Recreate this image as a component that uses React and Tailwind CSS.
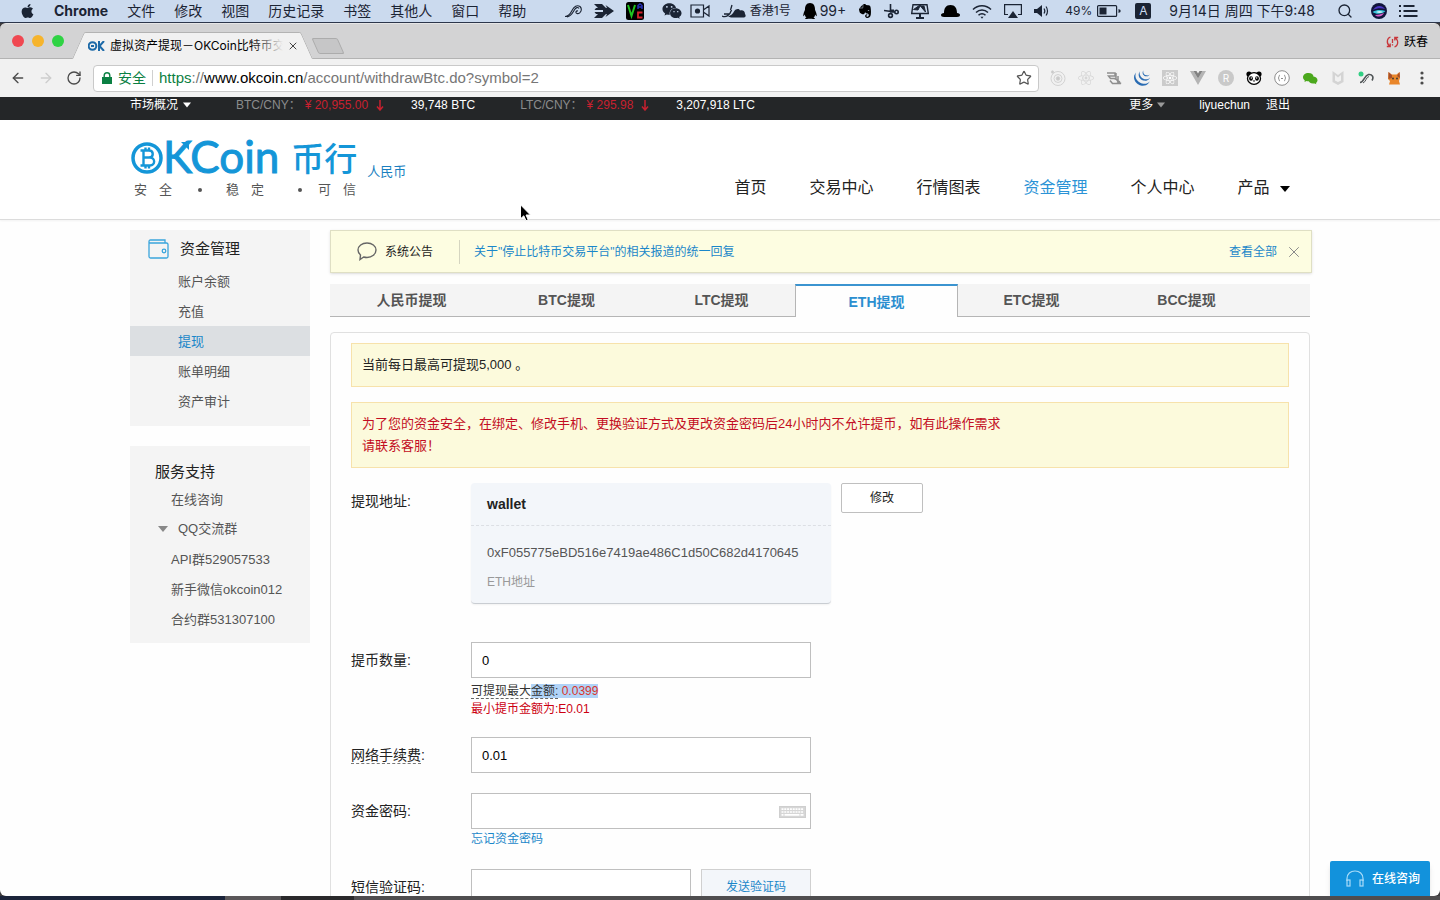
import React, { useState } from "react";
import { FaApple, FaWeixin, FaQq, FaEvernote, FaReact } from "react-icons/fa";
import { SiJquery } from "react-icons/si";
import { ArrowLeft, ArrowRight, RotateCw, Search, Star, X } from "lucide-react";

const menus = ["文件", "修改", "视图", "历史记录", "书签", "其他人", "窗口", "帮助"];

const navLinks = ["首页", "交易中心", "行情图表", "资金管理", "个人中心"];

const accountLinks = ["账户余额", "充值", "提现", "账单明细", "资产审计"];

const groups = ["API群529057533", "新手微信okcoin012", "合约群531307100"];

const tabs = ["人民币提现", "BTC提现", "LTC提现", "ETH提现", "ETC提现", "BCC提现"];

const Caret = ({ className }) => (
  <svg viewBox="0 0 10 6" className={className} fill="currentColor">
    <path d="M0 0h10L5 6z" />
  </svg>
);

const DownArrow = () => (
  <svg viewBox="0 0 8 11" className="w-2 h-[11px]" fill="none" stroke="currentColor" strokeWidth="1.5">
    <path d="M4 0v10M1 6.5l3 3.5 3-3.5" />
  </svg>
);

const StatusIcons = () => (
  <div className="flex items-center gap-3">
    <svg viewBox="0 0 18 14" className="w-[18px] h-3.5" fill="none" stroke="currentColor" strokeWidth="1.1">
      <path d="M1 12.500c3 0 5-2 7-6s5-6 8-4c3 3 0 8-3 7-2-1-1-3 1-2.500M3 13c4-1 5-3 7-6.500s4-3.500 5-2" />
    </svg>
    <svg viewBox="0 0 20 14" className="w-5 h-3.5" fill="currentColor">
      <path d="M0 0h8l4 4 1-.2L11.500 1 20 7l-8.500 6 1.500-2.800-1-.2-4 4H0l4-4H2L.5 8h8.500V6H.5L2 4h2z" />
    </svg>
    <svg viewBox="0 0 18 18" className="w-[18px] h-[18px]" fill="none">
      <rect width="18" height="18" rx="2.500" fill="#000" />
      <path d="M2 3l3.500 11L9 3" stroke="#1fc41f" strokeWidth="2" />
      <path d="M12 7V3.500l2-1.500 2 1.500V7M12 5h4" stroke="#2730b8" strokeWidth="1.500" />
      <path d="M16.500 10.500h-4.500v5h4.500" stroke="#d3202c" strokeWidth="1.800" />
    </svg>
    <FaWeixin className="w-5 h-5 ml-1.5" />
    <svg viewBox="0 0 20 14" className="w-5 h-3.5 -ml-1" fill="none" stroke="currentColor" strokeWidth="1.2">
      <path d="M1 1h12.500v12H1zM14 5.500L19 2v10l-5-3.500" />
      <circle cx="7.500" cy="7" r="2.600" fill="currentColor" stroke="none" />
    </svg>
    <div className="flex items-center gap-1">
      <svg viewBox="0 0 24 14" className="w-6 h-3.5" fill="currentColor">
        <path d="M6 12.500c3-1 5-3 6-5 2-3 5-3 6-1 3-1 5 1 5 3.500 1 1 1 3-1 3.500H9z" />
        <path d="M0 12c4 2 8-1 9.500-6M2 10h5M10 1L8.500 6" fill="none" stroke="currentColor" strokeWidth="1.300" />
      </svg>
      <span className="text-xs">香港1号</span>
    </div>
    <div className="flex items-center gap-[3px]">
      <FaQq className="w-3.5 h-4 text-black" />
      <span className="text-sm">99+</span>
    </div>
    <FaEvernote className="w-3.5 h-4 text-black" />
    <svg viewBox="0 0 15 16" className="w-[15px] h-4" fill="none" stroke="currentColor" strokeWidth="1.600">
      <path d="M0 7.500l11 1.500M6.500 1v8.500" />
      <circle cx="12.500" cy="9" r="1.700" />
      <circle cx="6.500" cy="12.500" r="1.900" />
      <path d="M6 8h4" strokeWidth="3" />
    </svg>
    <svg viewBox="0 0 18 15" className="w-[18px] h-[15px]" fill="none" stroke="currentColor">
      <path d="M2 .7h14l1.300 8.800H.7z" strokeWidth="1.400" />
      <path d="M2.500 5.500L9 1l2 3 3.500 4L13 2H9l-2 4z" fill="currentColor" />
      <path d="M9 9.500V14M5 14h8" strokeWidth="2" />
    </svg>
    <svg viewBox="0 0 19 14" className="w-[19px] h-3.5 text-black" fill="currentColor">
      <path d="M3 9C3 4 5 1 9.500 1S16 4 16 9c2 0 3 1 3 2s-1 2-3 2H3c-2 0-3-1-3-2s1-2 3-2z" />
    </svg>
    <svg viewBox="0 0 20 15" className="w-5 h-[15px]" fill="none" stroke="currentColor" strokeWidth="1.500">
      <path d="M1 5.500c5-5 13-5 18 0M4 8.500c3.500-3.500 8.500-3.500 12 0M6.500 11.200c2-2 5-2 7 0" />
      <path d="M8.500 12.800h3L10 14.800z" fill="currentColor" stroke="none" />
    </svg>
    <svg viewBox="0 0 18 14" className="w-[18px] h-3.5" fill="none" stroke="currentColor" strokeWidth="1.200">
      <path d="M4 10.500H.6V.6h16.800v9.900H14" />
      <path d="M9 7l5 7H4z" fill="currentColor" stroke="none" />
    </svg>
    <svg viewBox="0 0 15 12" className="w-[15px] h-3" fill="currentColor">
      <path d="M0 4h3l5-4v12L3 8H0z" />
      <path d="M10 3.500c1 1.500 1 3.500 0 5M12 1.500c2 2.500 2 6.500 0 9" fill="none" stroke="currentColor" strokeWidth="1.200" />
    </svg>
  </div>
);

const MenuBar = () => (
  <div className="flex items-center h-[23px] shrink-0 pl-5 pr-[22px] bg-[#cbdaee] border-b border-[#2c364b] text-[#1b2434] whitespace-nowrap">
    <FaApple className="w-[15px] h-4" />
    <span className="ml-[19px] text-sm font-bold">Chrome</span>
    <div className="flex gap-[19px] ml-[19px] text-sm">
      {menus.map((m) => (
        <button key={m} type="button">{m}</button>
      ))}
    </div>
    <div className="flex items-center ml-auto">
      <StatusIcons />
      <span className="ml-4 mr-[5px] text-xs">49%</span>
      <svg viewBox="0 0 24 12" className="w-6 h-3" fill="none" stroke="currentColor" strokeWidth="1.200">
        <rect x=".6" y=".6" width="19" height="10.800" rx="1" />
        <path d="M2.500 2.500h7v7h-7z" fill="currentColor" stroke="none" />
        <path d="M21.500 4v4l2-1V5z" fill="currentColor" stroke="none" />
      </svg>
      <span className="flex items-center justify-center w-4 h-4 ml-3.5 rounded-xs bg-[#1b2434] text-[#cbdaee] text-xs">A</span>
      <span className="ml-[18px] text-sm">9月14日 周四 下午9:48</span>
      <Search className="w-4 h-4 ml-[22px]" strokeWidth={2} />
      <svg viewBox="0 0 16 16" className="w-4 h-4 ml-[18px]">
        <circle cx="8" cy="8" r="8" fill="#10143c" />
        <path d="M2 7c3-5 9-5 12-1-4-1-8-1-12 1z" fill="#4a35c4" />
        <path d="M1.500 9c5-3 9-2 13-1-3 3-9 4-13 1z" fill="#37c4d9" />
        <path d="M4 12c3 0 6-1 9-2-1 3-6 5-9 2z" fill="#d95fc8" />
        <path d="M5 9c2-1 5-1 7 0-2 1-5 1-7 0z" fill="#fff" />
      </svg>
      <svg viewBox="0 0 19 12" className="w-[19px] h-3 ml-3" stroke="currentColor" strokeWidth="2">
        <path d="M0 1h2M0 6h2M0 11h2M4.500 1h11M4.500 6h14M4.500 11h14" />
      </svg>
    </div>
  </div>
);

const TabStrip = () => (
  <div className="flex items-end h-9 shrink-0 bg-[#d3d3d4] border-b border-[#b3b3b3] rounded-t-md border-t border-t-[#e6e6e6]">
    <div className="flex gap-2 pl-3 pb-[11px]">
      <span className="w-3 h-3 rounded-full bg-[#f04851]" />
      <span className="w-3 h-3 rounded-full bg-[#f6b42c]" />
      <span className="w-3 h-3 rounded-full bg-[#2fd344]" />
    </div>
    <div className="relative flex items-center w-[229px] h-[27px] ml-3.5 -mb-px pl-2.5 pr-2">
      <span className="absolute inset-y-0 left-0 w-3/5 bg-[#f1f1f1] border-t border-l border-[#b3b3b3] rounded-tl-xs -skew-x-[24deg]" />
      <span className="absolute inset-y-0 right-0 w-3/5 bg-[#f1f1f1] border-t border-r border-[#b3b3b3] rounded-tr-xs skew-x-[24deg]" />
      <div className="relative flex items-center w-full">
        <svg viewBox="0 0 17 10" className="w-[17px] h-2.5 shrink-0" fill="none" stroke="#1d6aa8" strokeWidth="2">
          <circle cx="4.500" cy="5" r="3.800" />
          <path d="M3 5h3" />
          <path d="M11 0v10M16 0l-4.500 5L16 10" />
        </svg>
        <div className="relative flex-1 ml-[5px] overflow-hidden text-xs text-black whitespace-nowrap">
          虚拟资产提现－OKCoin比特币交
          <span className="absolute inset-y-0 right-0 w-8 bg-linear-to-r from-transparent to-[#f1f1f1]" />
        </div>
        <button type="button" aria-label="关闭标签页" className="ml-1">
          <X className="w-3 h-3 text-[#444]" />
        </button>
      </div>
    </div>
    <button type="button" aria-label="新标签页" className="w-[26px] h-4 mb-1 ml-2 bg-[#c6c6c7] border border-[#acacac] rounded-xs skew-x-[24deg]" />
    <div className="flex items-center gap-[5px] ml-auto mr-3 mb-2 text-xs text-black">
      <svg viewBox="0 0 13 12" className="w-[13px] h-3" fill="none" stroke="#c8363a" strokeWidth="1.300">
        <path d="M4.500 1C1 2 0 7 3.500 10M.8 10.500h3.400V7.500M8.500 11c3.500-1 4.500-6 1-9M12.200 1.500H8.800v3M6.500 3v4M6.500 8.200v1.300" />
      </svg>
      跃春
    </div>
  </div>
);

const Extensions = () => (
  <div className="flex items-center gap-3 ml-[11px]">
    <svg viewBox="0 0 16 16" className="w-4 h-4" fill="none" stroke="#d2d2d2">
      <circle cx="8" cy="8.500" r="7" />
      <circle cx="8" cy="8.500" r="4" />
      <circle cx="8" cy="8.500" r="1.800" fill="#c8c8c8" />
      <circle cx="2.500" cy="2" r="1.200" fill="#c8c8c8" />
    </svg>
    <FaReact className="w-4 h-4 text-[#d6d6d6]" />
    <svg viewBox="0 0 16 16" className="w-4 h-4" fill="none" stroke="#8f8f8f" strokeWidth="1.500">
      <path d="M1 3h8v3H2.500l2 2.500H10V3M4 10.500l2.500 3H15l-4-2M8 8.500c3 0 4 3 6 5M12 6v5l2 1" />
    </svg>
    <SiJquery className="w-4 h-4 text-[#2a6cb3]" />
    <span className="flex items-center justify-center w-4 h-4 bg-[#cbcbcb]">
      <FaReact className="w-3.5 h-3.5 text-white" />
    </span>
    <svg viewBox="0 0 16 16" className="w-4 h-4">
      <path d="M0 1h3.500L8 8.500 12.500 1H16L8 15z" fill="#b4b4b4" />
      <path d="M3.500 1h3L8 3.500 9.500 1h3L8 8.500z" fill="#828282" />
    </svg>
    <span className="flex items-center justify-center w-4 h-4 rounded-full bg-[#c9c9c9] text-white text-[10px]">R</span>
    <svg viewBox="0 0 16 16" className="w-4 h-4">
      <circle cx="3" cy="4" r="2.600" />
      <circle cx="13" cy="4" r="2.600" />
      <ellipse cx="8" cy="8.500" rx="6.500" ry="5.800" fill="#fff" stroke="#000" strokeWidth="1.300" />
      <ellipse cx="5" cy="8.500" rx="1.900" ry="2.300" />
      <ellipse cx="11" cy="8.500" rx="1.900" ry="2.300" />
      <circle cx="5.300" cy="8" r=".7" fill="#fff" />
      <circle cx="10.700" cy="8" r=".7" fill="#fff" />
      <path d="M6.800 10.500h2.400L8 12z" />
    </svg>
    <svg viewBox="0 0 16 16" className="w-4 h-4" fill="none" stroke="#8c8c8c">
      <circle cx="8" cy="8" r="7.300" fill="#fff" />
      <path d="M6 5c-1.500 0-.5 3-2 3 1.500 0 .5 3 2 3M10 5c1.500 0 .5 3 2 3-1.500 0-.5 3-2 3" />
      <path d="M7 8.500h2" strokeWidth="1.200" />
    </svg>
    <svg viewBox="0 0 16 16" className="w-4 h-4" fill="#4ba81d">
      <path d="M6.500 3C3 3 1 5 1 7.300c0 1.400.8 2.500 1.800 3.200L2.500 12l2-1c3 .8 7-.5 7-4C11.500 4.500 9.500 3 6.500 3z" />
      <path d="M10.500 6.500c3 0 5 1.600 5 3.700 0 1.200-.7 2.100-1.500 2.700l.3 1.300-1.600-.8c-3.500.8-6.200-1-6.200-3.300 0-2 1.700-3.600 4-3.600z" />
    </svg>
    <svg viewBox="0 0 16 16" className="w-4 h-4" fill="#d4d4d4">
      <path d="M2.500 1L8 5l5.500-4v11L8 15l-5.500-3zM5 5v5.500L8 12l3-1.500V5L8 7.500z" fillRule="evenodd" />
    </svg>
    <svg viewBox="0 0 16 16" className="w-4 h-4" fill="none" stroke="#4f5456" strokeWidth="1.600">
      <circle cx="3" cy="4" r="2.500" fill="#31cf83" stroke="none" />
      <path d="M2 12.500c4 0 4-7 8.500-8 4-.5 5.500 3 3.500 6" />
      <path d="M5 13c3-1 3-6 6-6.500" strokeWidth="1" />
    </svg>
    <svg viewBox="0 0 16 16" className="w-4 h-4" fill="#e9862a">
      <path d="M2.500 2l3 2.500h5l3-2.500.5 6-1 3 1 3.500H3L4 11 2 9z" />
      <path d="M2.500 2l3.500 3v3l-3.500 1zM13.500 2l-2.500 4 3 2z" fill="#a8502a" />
      <circle cx="7" cy="8.500" r=".9" fill="#333" />
      <circle cx="11" cy="8.500" r=".9" fill="#333" />
    </svg>
    <button type="button" aria-label="菜单" className="flex justify-center w-4">
      <svg viewBox="0 0 4 14" className="w-1 h-3.5" fill="#4a4a4a">
        <circle cx="2" cy="2" r="1.600" />
        <circle cx="2" cy="7" r="1.600" />
        <circle cx="2" cy="12" r="1.600" />
      </svg>
    </button>
  </div>
);

const Toolbar = () => (
  <div className="flex items-center h-[38px] shrink-0 pl-2.5 pr-2.5 bg-[#f1f1f1]">
    <button type="button" aria-label="后退"><ArrowLeft className="w-4 h-4 text-[#4b4b4b]" /></button>
    <button type="button" aria-label="前进" className="ml-3"><ArrowRight className="w-4 h-4 text-[#cdcdcd]" /></button>
    <button type="button" aria-label="重新加载" className="ml-3"><RotateCw className="w-4 h-4 text-[#4b4b4b]" /></button>
    <div className="flex items-center flex-1 h-[27px] ml-[11px] px-2 bg-white border border-[#c9c9c9] rounded">
      <svg viewBox="0 0 10 12" className="w-2.5 h-3" fill="#0b8043">
        <path d="M0 5h10v7H0z" />
        <path d="M2.200 5V3.500a2.800 2.800 0 015.600 0V5" fill="none" stroke="#0b8043" strokeWidth="1.400" />
      </svg>
      <span className="ml-1.5 pr-1.5 text-sm leading-4 text-[#0b8043] border-r border-[#d0d0d0]">安全</span>
      <span className="ml-1.5 font-['Liberation_Sans',sans-serif] text-[15px] text-[#767676]">
        <span className="text-[#0b8043]">https</span>://<span className="text-black">www.okcoin.cn</span>/account/withdrawBtc.do?symbol=2
      </span>
      <button type="button" aria-label="收藏" className="ml-auto -mr-1.5"><Star className="w-4 h-4 mr-1 text-[#555]" strokeWidth={1.8} /></button>
    </div>
    <Extensions />
  </div>
);

const TopBar = () => (
  <div className="h-[23px] pb-[7px] bg-[#242628] text-xs text-white">
    <div className="flex items-center w-[1180px] h-full mx-auto whitespace-nowrap">
      <a href="#market" className="flex items-center gap-[5px]">
        市场概况 <Caret className="w-2 h-1.5" />
      </a>
      <span className="ml-[45px] text-[#8b8c8d]">BTC/CNY：</span>
      <span className="flex items-center gap-2 ml-1 text-[#c8202f]">¥ 20,955.00 <DownArrow /></span>
      <span className="ml-[27px]">39,748 BTC</span>
      <span className="ml-[45px] text-[#8b8c8d]">LTC/CNY：</span>
      <span className="flex items-center gap-2 ml-1 text-[#c8202f]">¥ 295.98 <DownArrow /></span>
      <span className="ml-[27px]">3,207,918 LTC</span>
      <div className="flex items-center ml-auto pr-5">
        <a href="#more" className="flex items-center gap-1">
          更多 <Caret className="w-2 h-1.5 text-[#9a9a9a]" />
        </a>
        <a href="#user" className="ml-[34px]">liyuechun</a>
        <a href="#logout" className="ml-4">退出</a>
      </div>
    </div>
  </div>
);

const Logo = () => (
  <a href="#home" className="block pt-4 text-[#1496d8]">
    <div className="flex items-end h-10">
      <svg viewBox="0 0 32 32" className="w-8 h-8 mb-0.5 ml-px" fill="none" stroke="currentColor">
        <circle cx="16" cy="16" r="14" strokeWidth="3.500" />
        <path d="M9.500 8.500H18c5 0 5 7 0 7h-5.500M12.500 15.500H19c5.500 0 5.500 8 0 8H9.500M12.500 8.500v15M14.500 5.500v3M18 5.500v3M14.500 23.500v3M18 23.500v3" strokeWidth="2.400" />
      </svg>
      <span className="relative font-[Lato] text-[44px] leading-10 [-webkit-text-stroke:1px]">
        KCoin
        <svg viewBox="0 0 8 8" className="absolute top-1.5 left-[18px] w-2 h-2" fill="currentColor">
          <path d="M0 0h8v8z" />
        </svg>
      </span>
      <span className="ml-3 text-[33px] leading-8 font-medium">币行</span>
      <span className="ml-2.5 text-[13px] leading-5 text-[#1a7fc0] translate-y-1.5">人民币</span>
    </div>
    <div className="flex items-center w-[226px] pl-1 mt-1 text-[13px] leading-5 text-[#555]">
      <span className="flex gap-3"><span>安</span><span>全</span></span>
      <span className="w-1 h-1 ml-[26px] rounded-full bg-[#555]" />
      <span className="flex gap-3 ml-6"><span>稳</span><span>定</span></span>
      <span className="w-1 h-1 ml-auto rounded-full bg-[#555]" />
      <span className="flex gap-3 ml-4"><span>可</span><span>信</span></span>
    </div>
  </a>
);

const SiteHeader = () => (
  <header className="h-[100px] bg-white border-b border-[#dcdcdc] shadow-xs">
    <div className="flex justify-between w-[1180px] mx-auto">
      <Logo />
      <nav className="flex items-start gap-[43px] pt-14 pr-5 text-base text-[#222]">
        {navLinks.map((n) => (
          <a key={n} href="#nav" className={n === "资金管理" ? "text-[#2b93d6]" : ""}>{n}</a>
        ))}
        <a href="#products">
          产品 <Caret className="inline-block w-2.5 h-1.5 ml-1.5 align-middle text-black" />
        </a>
      </nav>
    </div>
  </header>
);

const Sidebar = () => (
  <aside className="w-[180px] shrink-0 text-[13px] text-[#555]">
    <div className="pb-2.5 bg-[#f4f4f4]">
      <h2 className="flex items-center h-9 pl-[18px] pt-0.5 text-[15px] text-[#222]">
        <svg viewBox="0 0 22 20" className="w-[22px] h-5 mr-2.5" fill="none" stroke="#3aa5dc" strokeWidth="1.300">
          <path d="M1 3v14.500q0 1.500 1.500 1.500h16q1.500 0 1.500-1.500V5.500q0-1.500-1.500-1.500H2.500Q1 4 1 2.500 1 1 2.500 1H17v3" />
          <circle cx="16" cy="12" r="1.800" />
        </svg>
        资金管理
      </h2>
      {accountLinks.map((l) => (
        <a
          key={l}
          href="#account"
          className={`block h-[30px] pl-12 leading-8 ${l === "提现" ? "bg-[#dcdfe2] text-[#1b87c9]" : ""}`}
        >
          {l}
        </a>
      ))}
    </div>
    <div className="mt-5 pt-3 pb-[9px] bg-[#f4f4f4]">
      <h2 className="h-7 pl-[25px] text-[15px] leading-7 text-[#222]">服务支持</h2>
      <a href="#chat" className="block h-7 pl-[41px] leading-7">在线咨询</a>
      <a href="#qq" className="flex items-center h-[30px] pl-7">
        <Caret className="w-2.5 h-1.5 mr-2.5 text-[#888]" /> QQ交流群
      </a>
      {groups.map((g) => (
        <a key={g} href="#group" className="block h-[30px] pl-[41px] leading-8">{g}</a>
      ))}
    </div>
  </aside>
);

const Notice = () => (
  <div className="flex items-center h-[43px] -mr-0.5 px-[26px] bg-[#fdfde1] border border-[#dfdfc4] shadow-sm text-xs">
    <svg viewBox="0 0 20 19" className="w-5 h-[19px]" fill="none" stroke="#666" strokeWidth="1.400">
      <path d="M10 1c5 0 9 3 9 7s-4 7.500-9 7.500c-1.200 0-2.300-.2-3.300-.5L3 17.500 3.500 13C2 11.800 1 10 1 8c0-4 4-7 9-7z" />
    </svg>
    <span className="ml-2 text-[#222]">系统公告</span>
    <span className="w-px h-6 mr-3.5 ml-[26px] bg-[#d5d5c0]" />
    <a href="#notice" className="text-[#1b87c9]">关于"停止比特币交易平台"的相关报道的统一回复</a>
    <a href="#all" className="ml-auto text-[#1b87c9]">查看全部</a>
    <button type="button" aria-label="关闭公告" className="ml-2 -mr-[18px]">
      <X className="w-[18px] h-[18px] text-[#888]" strokeWidth={1.3} />
    </button>
  </div>
);

const Row = ({ label, id, dashed, className = "", children }) => (
  <div className={`flex ${className}`}>
    <label htmlFor={id} className="w-[120px] h-9 shrink-0 text-sm leading-9 text-[#222]">
      <span className={dashed ? "border-b border-dashed border-[#777]" : ""}>{label}</span>:
    </label>
    <div>{children}</div>
  </div>
);

const inputStyle = "block h-9 px-2.5 bg-white border border-[#bfbfbf] text-[13px] text-black outline-none";

const WithdrawForm = () => {
  const [amount, setAmount] = useState("0");
  const [fee, setFee] = useState("0.01");
  const [password, setPassword] = useState("");
  const [code, setCode] = useState("");

  return (
    <form onSubmit={(e) => e.preventDefault()} className="mt-[15px]">
      <Row label="提现地址" id="edit-address">
        <div className="flex items-start gap-2.5">
          <div className="w-[360px] h-[121px] bg-[#f3f6fa] border-b border-[#c9cdd2] rounded-sm shadow-xs">
            <div className="h-[43px] pl-4 text-sm leading-[43px] font-bold text-[#222] border-b border-dashed border-[#dcdfe4]">wallet</div>
            <div className="pl-4 pt-[15px] text-[13px] leading-6 text-[#555]">0xF055775eBD516e7419ae486C1d50C682d4170645</div>
            <div className="pl-4 pt-[3px] text-xs leading-7 text-[#999]">ETH地址</div>
          </div>
          <button id="edit-address" type="button" className="w-[82px] h-[30px] bg-white border border-[#bfbfbf] rounded-xs text-xs text-[#222]">
            修改
          </button>
        </div>
      </Row>

      <Row label="提币数量" id="amount" className="mt-[38px]">
        <input
          id="amount"
          type="text"
          value={amount}
          onChange={(e) => setAmount(e.target.value)}
          className={`${inputStyle} w-[340px]`}
        />
        <div className="pt-1 text-xs leading-[18px] text-[#333]">
          <p>
            <span className="border-b border-dashed border-[#666]">
              可提现最大<span className="bg-[#b1d3f7]">金额:</span>
            </span>
            <span className="bg-[#b1d3f7] text-[#d9352c]"> 0.0399</span>
          </p>
          <p className="text-[#cc0011]">最小提币金额为:E0.01</p>
        </div>
      </Row>

      <Row label="网络手续费" id="fee" dashed className="mt-[19px]">
        <input
          id="fee"
          type="text"
          value={fee}
          onChange={(e) => setFee(e.target.value)}
          className={`${inputStyle} w-[340px]`}
        />
      </Row>

      <Row label="资金密码" id="password" className="mt-5">
        <div className="relative">
          <input
            id="password"
            type="password"
            value={password}
            onChange={(e) => setPassword(e.target.value)}
            className={`${inputStyle} w-[340px]`}
          />
          <svg viewBox="0 0 27 12" className="absolute right-[5px] top-[13px] w-[27px] h-3" fill="none">
            <rect x=".5" y=".5" width="26" height="11" stroke="#cfcfcf" fill="#d6d6d6" />
            <path d="M2.500 3.200h22M2.500 6h22" stroke="#fff" strokeWidth="1.700" strokeDasharray="2 .8" />
            <path d="M2.500 8.900h2M5.500 8.900h15M21.500 8.900h3" stroke="#fff" strokeWidth="1.700" />
          </svg>
        </div>
        <a href="#forgot" className="block text-xs leading-5 text-[#1b87c9]">忘记资金密码</a>
      </Row>

      <Row label="短信验证码" id="code" className="mt-5">
        <div className="flex gap-2.5">
          <input
            id="code"
            type="text"
            value={code}
            onChange={(e) => setCode(e.target.value)}
            className={`${inputStyle} w-[220px]`}
          />
          <button type="button" className="w-[110px] h-9 bg-[#f3f6fa] border border-[#d0d0d0] text-xs text-[#1b87c9]">
            发送验证码
          </button>
        </div>
      </Row>
    </form>
  );
};

const App = () => {
  const [active, setActive] = useState("ETH提现");

  return (
    <div className="flex flex-col h-screen overflow-hidden bg-[#3c3a3c] font-[Inter,'Noto_Sans_CJK_SC',sans-serif]">
      <MenuBar />
      <TabStrip />
      <Toolbar />

      <div className="relative flex-1 min-h-0 overflow-hidden rounded-b-md bg-[#fefefe] font-['Liberation_Sans','Noto_Sans_CJK_SC',sans-serif]">
        <TopBar />
        <SiteHeader />

        <div className="flex gap-5 w-[1180px] mx-auto pt-2.5">
          <Sidebar />
          <main className="flex-1 min-w-0">
            <Notice />
            <div className="flex h-[33px] pl-1 mt-[11px] bg-[#f4f4f4] border-b border-[#b5b5b5] text-sm font-bold text-[#555]">
              {tabs.map((t) => (
                <button
                  key={t}
                  type="button"
                  onClick={() => setActive(t)}
                  className={
                    t === active
                      ? "w-[163px] -mx-1 -mb-px bg-[#fefefe] border-x border-[#b5b5b5] border-t-2 border-t-[#3b94d0] text-[#2b8fd0]"
                      : "w-[155px]"
                  }
                >
                  {t}
                </button>
              ))}
            </div>

            <div className="mt-[15px] px-5 pt-2.5 pb-10 border border-[#e0e0e0] rounded">
              <p className="px-2.5 py-2.5 bg-[#fcfadc] border border-[#f7e2ab] text-[13px] leading-[22px] text-[#222]">
                当前每日最高可提现5,000 。
              </p>
              <p className="px-2.5 py-2.5 mt-[15px] bg-[#fcfadc] border border-[#f7e2ab] text-[13px] leading-[22px] text-[#c30d23]">
                为了您的资金安全，在绑定、修改手机、更换验证方式及更改资金密码后24小时内不允许提币，如有此操作需求<br />
                请联系客服！
              </p>
              <WithdrawForm />
            </div>
          </main>
        </div>

        <button type="button" className="absolute bottom-0 right-2.5 flex items-center justify-end gap-2 w-[100px] h-[35px] pr-2.5 bg-[#1292dc] rounded-t-xs shadow-md text-xs font-medium text-white">
          <svg viewBox="0 0 18 17" className="w-[18px] h-[17px]" fill="none" stroke="#a8dbf8" strokeWidth="1.200">
            <path d="M1 11V8.500C1 4 4.500 1 9 1s8 3 8 7.500V11" />
            <rect x="1" y="10" width="3" height="6" />
            <rect x="14" y="10" width="3" height="6" />
          </svg>
          在线咨询
        </button>

        {/* mouse pointer */}
        <svg viewBox="0 0 11 18" className="absolute left-[520px] top-[107px] w-[11px] h-[18px]" fill="#000" stroke="#fff">
          <path d="M.5.800v14l3.300-3 2.200 5 2.200-1-2.200-4.800h4.500z" />
        </svg>
      </div>

      {/* strip of the dock that peeks out under the window */}
      <div className="flex h-1 shrink-0">
        <span className="w-[225px] bg-[#1b243a]" />
        <span className="w-[56px] bg-[#5a5759]" />
        <span className="w-[73px] bg-[#2a292b]" />
        <span className="flex-1 bg-[#4f4d4f]" />
      </div>
    </div>
  );
};

export default App;
